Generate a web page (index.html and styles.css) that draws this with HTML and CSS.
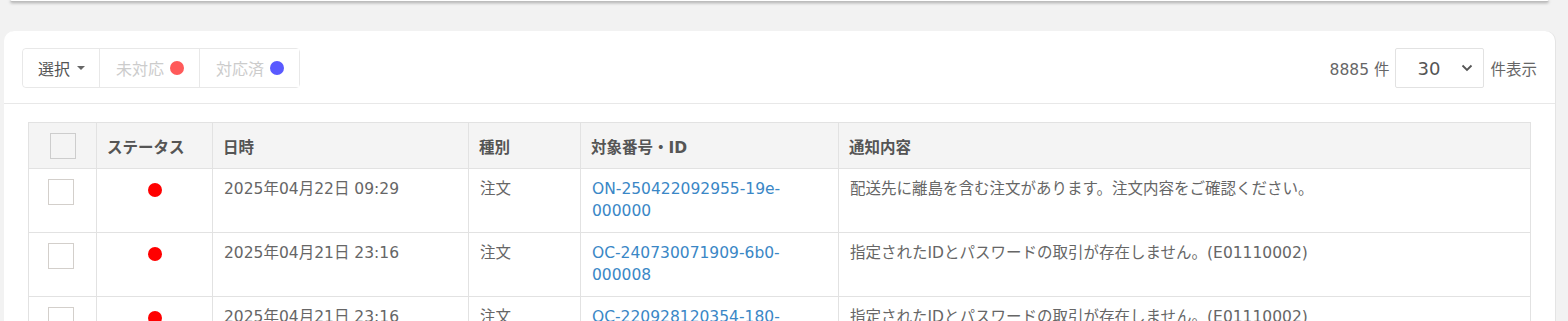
FILE: index.html
```html
<!DOCTYPE html>
<html lang="ja">
<head>
    <meta charset="utf-8">
    <title>通知一覧</title>
    <link rel="stylesheet" href="styles.css">
</head>
<body>
    <div class="prev-card"></div>

    <div class="card">
        <div class="toolbar">
            <div class="btn-group">
                <button class="btn">選択 <span class="caret"></span></button>
                <button class="btn disabled">未対応 <span class="dot dot-red"></span></button>
                <button class="btn disabled">対応済 <span class="dot dot-blue"></span></button>
            </div>
            <div class="pager">
                <span>8885 件</span>
                <div class="per-page">
                    <span>30</span>
                    <svg width="12" height="8" viewBox="0 0 12 8"><path d="M1.5 1.5 L6 6 L10.5 1.5" fill="none" stroke="#555" stroke-width="1.8"/></svg>
                </div>
                <span>件表示</span>
            </div>
        </div>

        <div class="table-wrap">
            <table class="list">
                <colgroup>
                    <col class="c-check">
                    <col class="c-status">
                    <col class="c-date">
                    <col class="c-type">
                    <col class="c-id">
                    <col>
                </colgroup>
                <thead>
                    <tr>
                        <th class="center"><span class="check head"></span></th>
                        <th>ステータス</th>
                        <th>日時</th>
                        <th>種別</th>
                        <th>対象番号・ID</th>
                        <th>通知内容</th>
                    </tr>
                </thead>
                <tbody>
                    <tr>
                        <td class="center"><span class="check"></span></td>
                        <td class="center"><span class="status"></span></td>
                        <td>2025年04月22日 09:29</td>
                        <td>注文</td>
                        <td><a href="#">ON-250422092955-19e-000000</a></td>
                        <td>配送先に離島を含む注文があります。注文内容をご確認ください。</td>
                    </tr>
                    <tr>
                        <td class="center"><span class="check"></span></td>
                        <td class="center"><span class="status"></span></td>
                        <td>2025年04月21日 23:16</td>
                        <td>注文</td>
                        <td><a href="#">OC-240730071909-6b0-000008</a></td>
                        <td>指定されたIDとパスワードの取引が存在しません。(E01110002)</td>
                    </tr>
                    <tr>
                        <td class="center"><span class="check"></span></td>
                        <td class="center"><span class="status"></span></td>
                        <td>2025年04月21日 23:16</td>
                        <td>注文</td>
                        <td><a href="#">OC-220928120354-180-000011</a></td>
                        <td>指定されたIDとパスワードの取引が存在しません。(E01110002)</td>
                    </tr>
                </tbody>
            </table>
        </div>
    </div>
</body>
</html>
```

FILE: styles.css
```css
html, body { margin: 0; padding: 0; }
body { background: #f2f2f2; font-family: "DejaVu Sans", "Noto Sans CJK JP", sans-serif; color: #666; overflow: hidden; }

.prev-card { height: 1px; margin: 0 19px 0 10px; background: #fff; border-bottom: 1px solid #bdbdbd; border-radius: 0 0 6px 6px; box-shadow: 0 1px 3px rgba(0,0,0,.35); }

.card { width: 1551px; margin: 29px 0 0 4px; background: #fff; border-radius: 10px; box-shadow: 1px 0 0 #e4e4e4; }

.toolbar { display: flex; justify-content: space-between; align-items: center; padding: 17px 18px 15px; border-bottom: 1px solid #e8e8e8; }
.btn-group { display: flex; border: 1px solid #e8e8e8; border-radius: 4px; height: 38px; }
.btn { display: flex; align-items: center; gap: 6px; padding: 0 15px; height: 38px; background: #fff; border: none; border-left: 1px solid #e8e8e8; font-family: inherit; font-size: 16px; color: #555; cursor: pointer; }
.btn:first-child { border-left: none; border-radius: 4px 0 0 4px; padding: 0 14px 0 15px; }
.btn.disabled { color: #ccc; padding: 0 15px 0 16px; }
.caret { display: inline-block; width: 0; height: 0; border-left: 4px solid transparent; border-right: 4px solid transparent; border-top: 4px solid #666; margin-left: 1px; }
.dot { display: inline-block; width: 14px; height: 14px; border-radius: 50%; }
.dot-red { background: #ff5a5a; }
.dot-blue { background: #5a5aff; }

.pager { display: flex; align-items: center; gap: 6px; font-size: 15.5px; color: #666; }
.per-page { display: flex; align-items: center; justify-content: space-between; box-sizing: border-box; width: 89px; height: 40px; padding: 0 10px 0 21px; border: 1px solid #e2e2e2; border-radius: 2px; font-size: 18px; color: #555; }

.table-wrap { padding: 18px 24px 0; }
.list { width: 1503px; table-layout: fixed; border-collapse: collapse; font-size: 15.5px; }
.c-check { width: 68px; }
.c-status { width: 116px; }
.c-date { width: 256px; }
.c-type { width: 112px; }
.c-id { width: 258px; }
.list th, .list td { border: 1px solid #e2e2e2; text-align: left; vertical-align: top; }
.list th { background: #f4f4f4; color: #555; font-weight: bold; height: 46px; padding: 0 11px 0 10px; box-sizing: border-box; vertical-align: middle; }
.list td { padding: 9px 11px 10px; line-height: 22px; height: 44px; }
.list .center { text-align: center; padding-left: 0; padding-right: 0; }
.list a { color: #3a87c6; text-decoration: none; }

.check { display: inline-block; width: 24px; height: 24px; border: 1px solid #d3cfcb; background: #fff; vertical-align: top; margin: 1px 4px 0 0; }
.check.head { border-color: #cdcdcd; margin: 0; vertical-align: middle; background: #f4f4f4; }
.status { display: inline-block; width: 14px; height: 14px; border-radius: 50%; background: #f00; margin-top: 5px; vertical-align: top; }
```
